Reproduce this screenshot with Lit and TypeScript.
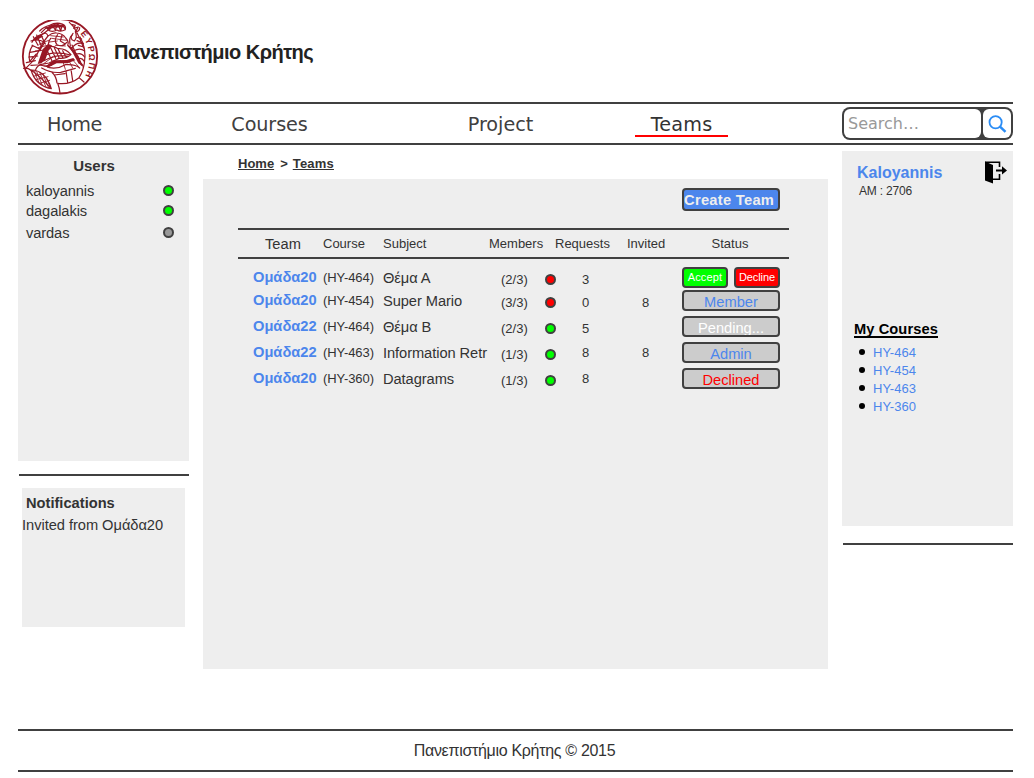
import { LitElement, html, svg, css, nothing } from "lit";
import { customElement } from "lit/decorators.js";
import { classMap } from "lit/directives/class-map.js";

interface TeamRow {
  team: string;
  course: string;
  subject: string;
  members: string;
  open: boolean;
  requests: string;
  invited: string;
  status: "invite" | "member" | "pending" | "admin" | "declined";
  raised?: boolean;
}

const TEAMS: TeamRow[] = [
  { team: "Ομάδα20", course: "(HY-464)", subject: "Θέμα Α", members: "(2/3)", open: false, requests: "3", invited: "", status: "invite" },
  { team: "Ομάδα20", course: "(HY-454)", subject: "Super Mario", members: "(3/3)", open: false, requests: "0", invited: "8", status: "member" },
  { team: "Ομάδα22", course: "(HY-464)", subject: "Θέμα Β", members: "(2/3)", open: true, requests: "5", invited: "", status: "pending" },
  { team: "Ομάδα22", course: "(HY-463)", subject: "Information Retr", members: "(1/3)", open: true, requests: "8", invited: "8", status: "admin", raised: true },
  { team: "Ομάδα20", course: "(HY-360)", subject: "Datagrams", members: "(1/3)", open: true, requests: "8", invited: "", status: "declined", raised: true },
];

const LABELS: Record<string, string> = {
  member: "Member",
  pending: "Pending...",
  admin: "Admin",
  declined: "Declined",
};

const RIM: [string, number, number, number][] = [
  ["Ε", 208, 57, 52],
  ["Υ", 221, 78, 64],
  ["Ρ", 229, 102, 78],
  ["Ω", 231, 127, 90],
  ["Π", 230, 153, 102],
  ["Η", 223, 178, 114],
];

@customElement("university-seal")
export class UniversitySeal extends LitElement {
  static styles = css`
    :host { display: block; width: 78px; height: 76px; }
    svg { display: block; }
    .ink { fill: none; stroke: #981825; stroke-width: 3.6; stroke-linecap: round; stroke-linejoin: round; }
    .rim { stroke-width: 5.5; }
    .fine { stroke-width: 2.6; }
    .solid { fill: #981825; stroke: none; }
    .letter { fill: #981825; font: bold 26px "Liberation Sans", sans-serif; text-anchor: middle; }
  `;
  render() {
    return html`<svg width="78" height="76" viewBox="18 15 234 228">
      <circle class="ink rim" cx="135" cy="124" r="111.5"/>
      <path class="ink" d="M195 66C208 88 213 116 208 145C205 162 200 176 192 188C175 202 153 208 128 205M192 188L207 201M128 205Q134 220 135 235M26 160Q38 158 48 166"/>
      <path class="ink" d="M48 165C73 164 98 183 109 221C80 216 58 198 48 165ZM48 165Q72 181 109 221"/>
      <path class="ink fine" d="M57 168L72 203M65 169L82 211M74 172L93 216M84 178L101 219M94 188L106 217M55 184L91 174M62 194L99 185M73 205L104 196"/>
      <path class="ink" d="M74 48Q86 35 104 31Q123 20 142 27Q154 32 151 44Q136 52 126 45Q111 53 99 45Q87 57 75 61M79 53L94 38L103 47L110 29L121 45L128 25L137 48L142 27L151 44"/>
      <path class="ink" d="M163 22Q178 35 184 50Q194 48 194 38M169 28L181 31L176 40L190 36L183 48M174 55Q161 72 178 78Q188 66 181 50M186 53Q198 77 206 99M184 66L200 72M186 77L203 84M190 91L206 96"/>
      <path class="ink" d="M51 82Q60 63 81 58Q94 49 99 63Q79 87 65 121Q53 143 34 158M98 64Q111 52 125 54Q143 55 152 69Q163 81 158 91L188 125L201 151M107 70Q95 86 105 100Q91 109 84 138M128 59Q115 76 126 89Q144 98 155 82M141 60L136 78L151 87"/>
      <path class="ink" d="M48 78Q68 69 89 82L76 103L51 91M53 91Q38 113 44 139L64 117M45 112L78 106M41 126L68 123M34 143L61 137M55 65L69 91M65 60L80 96M79 62L91 87"/>
      <path class="ink" d="M91 100Q110 88 129 101Q151 99 168 119Q154 132 132 130L102 144L75 149Q62 157 61 168M96 106L111 138M107 98L122 130M118 98L132 128M130 104L144 129M143 107L153 126M93 119Q126 108 166 120M87 137Q125 116 161 124"/>
      <path class="solid" d="M83 103L99 87L111 91L101 106L91 134L79 145L68 147ZM116 136L154 135L175 129L181 136L158 145L125 145L98 158L93 153ZM158 89L170 96L191 124L202 153L190 145L174 115ZM56 70L78 59L85 64L60 79ZM91 38L117 27L148 30L148 37L117 38L99 44Z"/>
      <path class="ink" d="M166 92Q160 69 171 61M170 99Q186 79 205 86M177 107Q195 97 209 108M182 119Q198 111 209 126M188 132Q200 126 208 139M193 144Q202 143 205 157M171 90L199 150"/>
      <path class="ink" d="M48 151Q83 147 103 158Q128 163 151 149Q182 147 194 159M80 159Q108 175 137 172L181 160M110 171Q124 184 126 204M153 169L158 202M168 163L173 197M118 180L150 176"/>
      <path class="ink fine" d="M72 88L101 76M69 98L97 91M61 108L90 105M107 62L145 66M110 70L154 76M103 81L127 78M121 91L151 93M86 146L113 126M101 150L137 137M144 140L151 163M161 136L173 159M174 136L190 154M87 153L110 151"/>
      ${RIM.map(([l, x, y, a]) => svg`<text class="letter" transform=${`translate(${x} ${y}) rotate(${a})`} y="9">${l}</text>`)}
    </svg>`;
  }
}

@customElement("app-root")
export class AppRoot extends LitElement {
  static styles = css`
    :host { display: block; width: 1034px; height: 778px; overflow: hidden; background: #fff; color: #333; font-family: "Liberation Sans", Arial, sans-serif; font-size: 14.67px; line-height: 20px; }
    * { box-sizing: border-box; }
    .page { padding: 0 21px 0 18px; }
    .brand { display: flex; height: 102px; padding: 20px 0 0 3px; }
    .title { margin: 20px 0 0 15px; font-size: 20px; line-height: 24px; font-weight: bold; color: #222; white-space: nowrap; letter-spacing: -.53px; }
    .nav { display: flex; height: 43px; padding-left: 10px; border-top: 2px solid #404040; border-bottom: 2px solid #404040; font: 19.2px/24px "DejaVu Sans", sans-serif; color: #404040; }
    .tab { width: 93px; height: 33px; padding-top: 9px; text-align: center; flex: none; }
    .t1 { margin-right: 102px; letter-spacing: -.4px; }
    .t2 { margin-right: 138px; letter-spacing: -.1px; }
    .t3 { margin-right: 88px; }
    .active { border-bottom: 2px solid #f00; color: #333; margin-right: 114px; letter-spacing: .2px; }
    .search { display: flex; flex: none; width: 171px; height: 33px; margin-top: 3px; border-radius: 8px; background: #404040; padding: 2px; gap: 2px; }
    .field { width: 137px; background: #fff; border-radius: 6px; padding: 3px 0 0 4px; font-size: 16px; line-height: 23px; color: #999; }
    .go { flex: 1; background: #fff; border-radius: 6px; padding: 6px 0 0 5px; }
    svg { display: block; }
    .cols { display: flex; height: 584px; }
    .left { width: 171px; padding-top: 6px; margin-right: 14px; }
    .panel { background: #eee; }
    .users { height: 310px; padding: 5px 15px 0 8px; }
    .utitle { font-size: 15px; font-weight: bold; text-align: center; padding-right: 12px; height: 25px; }
    .user { display: flex; justify-content: space-between; height: 20px; letter-spacing: -.1px; }
    .user:nth-child(3) { height: 22px; }
    .dot { width: 11px; height: 11px; border-radius: 50%; border: 2px solid #404040; background: #0f0; flex: none; }
    .user .dot { margin-top: 4px; }
    .away { background: #999; }
    .full { background: #f00; }
    .rule { height: 2px; margin: 13px 0 12px 1px; background: #404040; }
    .notes { margin: 0 4px; height: 139px; padding-top: 5px; white-space: nowrap; letter-spacing: -.04px; }
    .ntitle { font-weight: bold; padding-left: 4px; height: 22px; letter-spacing: 0; }
    .mid { width: 625px; margin-right: 14px; }
    .crumbs { display: flex; height: 34px; padding: 9px 0 0 35px; font-size: 13px; font-weight: bold; gap: 6px; color: #333; }
    .crumbs .link:last-child { letter-spacing: .2px; margin-left: -1px; }
    .link { text-decoration: underline; }
    .board { height: 490px; padding: 9px 39px 0 35px; }
    .bar { display: flex; justify-content: flex-end; height: 40px; padding-right: 9px; }
    .create { width: 98px; height: 23px; border: 2px solid #404040; border-radius: 4px; background: #4c86ec; color: #eee; font-size: 14.67px; font-weight: bold; line-height: 20px; letter-spacing: .3px; white-space: nowrap; }
    .grid { display: grid; grid-template-columns: 85px 60px 106px 54px 19px 47px 73px 107px; white-space: nowrap; }
    .head { height: 31px; border-top: 2px solid #404040; border-bottom: 2px solid #404040; font-size: 13px; line-height: 28px; margin-bottom: 8px; }
    .hteam { font-size: 14.67px; padding-left: 27px; line-height: 28px; }
    .hreq { grid-column: span 2; padding-left: 12px; }
    .hinv { padding-left: 18px; }
    .hstat { text-align: center; padding-right: 11px; }
    .row { height: 26px; }
    .row.first { height: 23px; }
    .team { font-weight: bold; color: #4c86ec; padding-left: 15px; }
    .small { font-size: 13px; }
    .crs { padding-top: 1px; letter-spacing: -.08px; }
    .sub { padding-top: 1px; letter-spacing: -.07px; }
    .mem { padding: 3px 0 0 12px; }
    .row .dot { margin: 7px 0 0 2px; }
    .num { text-align: center; padding-top: 3px; }
    .raised .num { padding-top: 1px; }
    .st { display: flex; justify-content: space-between; padding-right: 9px; height: 21px; }
    .btn { height: 21px; border: 2px solid #404040; border-radius: 4px; background: #ccc; text-align: center; overflow: hidden; line-height: 21px; }
    .wide { width: 98px; }
    .half { width: 46px; font-size: 11px; line-height: 17px; color: #fff; background: #0f0; letter-spacing: .15px; }
    .no { background: #f00; letter-spacing: -.1px; }
    .blue { color: #4c86ec; }
    .white { color: #fff; }
    .red { color: #f00; }
    .right { width: 171px; padding-top: 6px; }
    .side { height: 375px; padding: 10px 6px 0 12px; }
    .who { display: flex; justify-content: space-between; height: 158px; padding-left: 3px; }
    .name { font-size: 16px; font-weight: bold; color: #4c86ec; line-height: 24px; height: 23px; }
    .am { font-size: 12px; line-height: 14px; letter-spacing: -.2px; padding-left: 2px; }
    .mine { width: 84px; height: 19px; border-bottom: 2px solid #000; color: #000; font-weight: bold; white-space: nowrap; letter-spacing: .08px; }
    .courses { list-style: none; margin: 5px 0 0 5px; padding: 0; font-size: 13px; line-height: 19px; }
    .courses li { display: flex; align-items: center; gap: 8px; height: 18px; color: #4c86ec; }
    .courses li::before { content: ""; width: 6px; height: 6px; border-radius: 3px; background: #000; }
    .endrule { height: 2px; margin: 17px 0 0 1px; background: #404040; }
    .foot { height: 43px; border-top: 2px solid #404040; border-bottom: 2px solid #404040; text-align: center; font-size: 16px; line-height: 40px; padding-right: 2px; letter-spacing: -.31px; }
  `;

  private status(r: TeamRow) {
    if (r.status === "invite") {
      return html`<div class="st"><div class="btn half">Accept</div><div class="btn half no">Decline</div></div>`;
    }
    const tone = {
      blue: r.status === "member" || r.status === "admin",
      white: r.status === "pending",
      red: r.status === "declined",
    };
    return html`<div class="st"><div class=${classMap({ btn: true, wide: true, ...tone })}>${LABELS[r.status]}</div></div>`;
  }

  private row(r: TeamRow, i: number) {
    return html`<div class=${classMap({ grid: true, row: true, first: i === 0, raised: !!r.raised })}>
      <div class="team">${r.team}</div>
      <div class="small crs">${r.course}</div>
      <div class="sub">${r.subject}</div>
      <div class="small mem">${r.members}</div>
      <div class=${classMap({ dot: true, full: !r.open })}></div>
      <div class="small num">${r.requests}</div>
      <div class="small num">${r.invited || nothing}</div>
      ${this.status(r)}
    </div>`;
  }

  render() {
    return html`<div class="page">
      <header class="brand"><university-seal></university-seal><div class="title">Πανεπιστήμιο Κρήτης</div></header>
      <nav class="nav">
        <div class="tab t1">Home</div>
        <div class="tab t2">Courses</div>
        <div class="tab t3">Project</div>
        <div class="tab active">Teams</div>
        <div class="search">
          <div class="field">Search…</div>
          <div class="go"><svg width="20" height="20" viewBox="0 0 20 20" fill="none" stroke="#2a8cf5"><circle cx="7.6" cy="7.2" r="6.1" stroke-width="1.8"/><path d="M12 11.6L17.5 16.8" stroke-width="2.5"/></svg></div>
        </div>
      </nav>
      <div class="cols">
        <div class="left">
          <div class="panel users">
            <div class="utitle">Users</div>
            <div class="user">kaloyannis<span class="dot"></span></div>
            <div class="user">dagalakis<span class="dot"></span></div>
            <div class="user">vardas<span class="dot away"></span></div>
          </div>
          <div class="rule"></div>
          <div class="panel notes"><div class="ntitle">Notifications</div>Invited from Ομάδα20</div>
        </div>
        <div class="mid">
          <div class="crumbs"><span class="link">Home</span><span>&gt;</span><span class="link">Teams</span></div>
          <div class="panel board">
            <div class="bar"><div class="create">Create Team</div></div>
            <div class="grid head">
              <div class="hteam">Team</div><div>Course</div><div>Subject</div><div>Members</div>
              <div class="hreq">Requests</div><div class="hinv">Invited</div><div class="hstat">Status</div>
            </div>
            ${TEAMS.map((r, i) => this.row(r, i))}
          </div>
        </div>
        <div class="right">
          <div class="panel side">
            <div class="who">
              <div><div class="name">Kaloyannis</div><div class="am">AM : 2706</div></div>
              <svg width="23" height="23" viewBox="0 0 23 23"><path d="M1 1.2H15.5V6M15.5 13V18.2H9" fill="none" stroke="#000" stroke-width="1.6"/><path d="M1 .5L9 4V22.5L1 19.5Z"/><path d="M12 8.4H18V5.2L23 9.5L18 13.4V10.4H12Z"/></svg>
            </div>
            <div class="mine">My Courses</div>
            <ul class="courses"><li>HY-464</li><li>HY-454</li><li>HY-463</li><li>HY-360</li></ul>
          </div>
          <div class="endrule"></div>
        </div>
      </div>
      <footer class="foot">Πανεπιστήμιο Κρήτης © 2015</footer>
    </div>`;
  }
}
